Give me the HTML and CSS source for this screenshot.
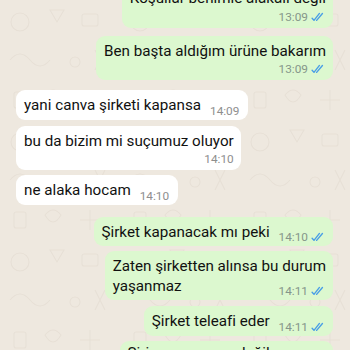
FILE: index.html
```html
<!DOCTYPE html>
<html lang="tr">
<head>
<meta charset="utf-8">
<link rel="stylesheet" href="styles.css">
</head>
<body>
<div class="chat">
  <div class="bubble out multi b1">
    <div class="text">Koşullar benimle alakalı değil</div>
    <div class="meta">13:09 <svg class="ticks" viewBox="0 0 16 10"><path d="M1.2 6.4 L3.2 8.6 L9 1.2 M6 8.6 L12.2 1.2"/></svg></div>
  </div>
  <div class="bubble out multi b2">
    <div class="text">Ben başta aldığım ürüne bakarım</div>
    <div class="meta">13:09 <svg class="ticks" viewBox="0 0 16 10"><path d="M1.2 6.4 L3.2 8.6 L9 1.2 M6 8.6 L12.2 1.2"/></svg></div>
  </div>
  <div class="bubble in inline b3">
    <div class="text">yani canva şirketi kapansa</div>
    <div class="meta">14:09</div>
  </div>
  <div class="bubble in multi b4">
    <div class="text">bu da bizim mi suçumuz oluyor</div>
    <div class="meta">14:10</div>
  </div>
  <div class="bubble in inline b5">
    <div class="text">ne alaka hocam</div>
    <div class="meta">14:10</div>
  </div>
  <div class="bubble out inline b6">
    <div class="text">Şirket kapanacak mı peki</div>
    <div class="meta">14:10 <svg class="ticks" viewBox="0 0 16 10"><path d="M1.2 6.4 L3.2 8.6 L9 1.2 M6 8.6 L12.2 1.2"/></svg></div>
  </div>
  <div class="bubble out wrap b7">
    <div class="text">Zaten şirketten alınsa bu durum</div>
    <div class="lastline">
      <div class="text">yaşanmaz</div>
      <div class="meta">14:11 <svg class="ticks" viewBox="0 0 16 10"><path d="M1.2 6.4 L3.2 8.6 L9 1.2 M6 8.6 L12.2 1.2"/></svg></div>
    </div>
  </div>
  <div class="bubble out inline b8">
    <div class="text">Şirket teleafi eder</div>
    <div class="meta">14:11 <svg class="ticks" viewBox="0 0 16 10"><path d="M1.2 6.4 L3.2 8.6 L9 1.2 M6 8.6 L12.2 1.2"/></svg></div>
  </div>
  <div class="bubble out inline b9">
    <div class="text">Şirin sorun ama değil</div>
    <div class="meta">14:12 <svg class="ticks" viewBox="0 0 16 10"><path d="M1.2 6.4 L3.2 8.6 L9 1.2 M6 8.6 L12.2 1.2"/></svg></div>
  </div>
</div>
</body>
</html>
```

FILE: styles.css
```css
html, body {
  margin: 0;
  padding: 0;
  width: 350px;
  height: 350px;
  overflow: hidden;
}

body {
  background-color: #eee8df;
  background-image: url("data:image/svg+xml,%3Csvg xmlns='http://www.w3.org/2000/svg' width='120' height='120' viewBox='0 0 120 120'%3E%3Cg fill='none' stroke='%23e7e0d6' stroke-width='1.1'%3E%3Ccircle cx='20' cy='22' r='9'/%3E%3Cpath d='M50 10 l14 0 l-7 12 z'/%3E%3Crect x='82' y='14' width='16' height='12' rx='2'/%3E%3Cpath d='M10 60 q10 -12 20 0 t20 0'/%3E%3Ccircle cx='75' cy='62' r='5'/%3E%3Cpath d='M95 50 l10 20 M105 50 l-10 20'/%3E%3Crect x='14' y='92' width='12' height='16' rx='2'/%3E%3Cpath d='M45 95 q8 -10 16 0 q-8 14 -16 0z'/%3E%3Cpath d='M80 100 l20 0 M90 90 l0 20'/%3E%3C/g%3E%3C/svg%3E");
}

.chat {
  display: flex;
  flex-direction: column;
  padding: 0 17px 0 16px;
  font-family: Roboto, "Liberation Sans", Arial, sans-serif;
  color: #111;
}

.bubble {
  padding: 6px 7px 4px 8px;
  border-radius: 9px;
  box-sizing: border-box;
}

.bubble.in {
  align-self: flex-start;
  background: #ffffff;
}

.bubble.out {
  align-self: flex-end;
  background: #dcf8cf;
}

.text {
  font-size: 15.2px;
  line-height: 19.5px;
  white-space: nowrap;
}

.meta {
  font-size: 11.8px;
  line-height: 14px;
  height: 14px;
  display: flex;
  align-items: center;
  justify-content: flex-end;
  gap: 3px;
  color: #8e8e8e;
}

.out .meta {
  color: #85968a;
}

.ticks {
  width: 15px;
  height: 10px;
  fill: none;
  stroke: #4a9fe6;
  stroke-width: 1.5;
  stroke-linecap: round;
  stroke-linejoin: round;
}

.multi {
  display: flex;
  flex-direction: column;
}

.multi .meta {
  margin-top: 1px;
}

.inline {
  display: flex;
  align-items: flex-end;
  gap: 9px;
}

.inline .meta {
  margin-bottom: -2px;
}

.wrap {
  display: flex;
  flex-direction: column;
}

.lastline {
  display: flex;
  align-items: flex-end;
  justify-content: space-between;
}

.wrap .meta {
  margin-bottom: -2px;
}

.in.inline {
  padding-right: 9px;
}

.b1 { margin-top: -17px; }
.b2 { margin-top: 8px; }
.b3 { margin-top: 10px; }
.b4 { margin-top: 6px; }
.b5 { margin-top: 5px; }
.b6 { margin-top: 12px; }
.b7 { margin-top: 5px; }
.b8 { margin-top: 6px; }
.b9 { margin-top: 5px; padding-top: 3px; }
```
